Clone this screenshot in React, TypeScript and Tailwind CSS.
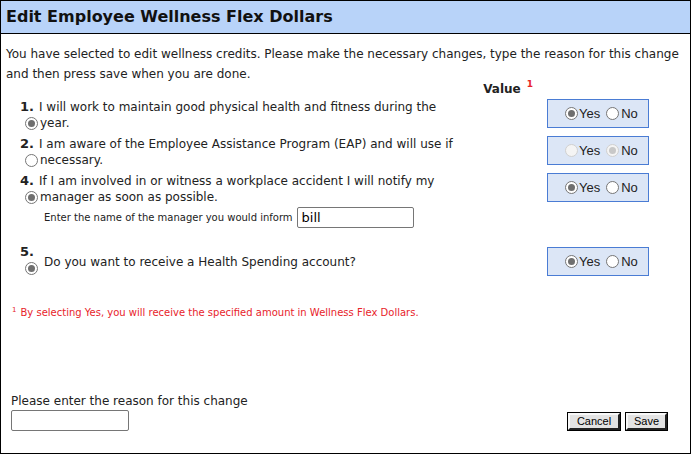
import React from "react";

type RadioState = "on" | "off" | "dis" | "dison";

function Radio({ s }: { s: RadioState }) {
  if (s === "on")
    return (
      <span className="inline-flex w-[13px] h-[13px] rounded-full border border-[#767676] bg-white items-center justify-center shrink-0">
        <span className="w-[7px] h-[7px] rounded-full bg-[#6f6f6f]" />
      </span>
    );
  if (s === "off")
    return <span className="inline-block w-[13px] h-[13px] rounded-full border border-[#767676] bg-white shrink-0" />;
  if (s === "dis")
    return <span className="inline-block w-[13px] h-[13px] rounded-full border border-[#d0d0d0] bg-[#f4f4f4] shrink-0" />;
  return (
    <span className="inline-flex w-[13px] h-[13px] rounded-full border border-[#d0d0d0] bg-[#f4f4f4] items-center justify-center shrink-0">
      <span className="w-[7px] h-[7px] rounded-full bg-[#c8c8c8]" />
    </span>
  );
}

function YesNo({ yes, no }: { yes: RadioState; no: RadioState }) {
  return (
    <div className="w-[102px] h-[29px] border border-[#4a7cd4] bg-[#dce6f6] flex items-center pl-[17px] font-['Liberation_Sans',Arial,sans-serif] text-[13px] text-[#222] shrink-0">
      <Radio s={yes} />
      <span className="ml-[1px]">Yes</span>
      <span className="ml-[6px]" />
      <Radio s={no} />
      <span className="ml-[2px]">No</span>
    </div>
  );
}

function Item({ n, line1, line2, radio, yes, no }: { n: string; line1: string; line2: string; radio: RadioState; yes: RadioState; no: RadioState }) {
  return (
    <div className="flex justify-between">
      <div className="text-[12px] leading-[16px]">
        <div className="flex items-baseline">
          <b className="text-[13px]">{n}</b>
          <span className="ml-[5px]">{line1}</span>
        </div>
        <div className="flex items-center pl-[5px]">
          <Radio s={radio} />
          <span className="ml-[2px]">{line2}</span>
        </div>
      </div>
      <YesNo yes={yes} no={no} />
    </div>
  );
}

export default function App() {
  return (
    <div className="w-[691px] h-[454px] border border-black bg-white font-['DejaVu_Sans',Verdana,sans-serif] text-[#222] flex flex-col">
      <div className="h-[33px] bg-[#b8d3f9] border-b border-black flex items-center pl-[5px] shrink-0">
        <h1 className="text-[16px] font-bold text-[#111]">Edit Employee Wellness Flex Dollars</h1>
      </div>
      <div className="flex-1 flex flex-col">
        <p className="text-[12px] leading-[20px] pl-[5px] pr-[6px] mt-[10px]">
          You have selected to edit wellness credits. Please make the necessary changes, type the reason for this change and then press save when you are done.
        </p>
        <div className="flex justify-end items-start pr-[157px] mt-[-1px] h-[11px]">
          <span className="text-[12px] font-bold leading-[12px]">Value</span>
          <span className="text-[9px] font-bold text-[#e8232a] ml-[6px] leading-[9px] mt-[-3px]">1</span>
        </div>

        <div className="flex flex-col gap-[5px] mt-[5px] pl-[19px] pr-[41px]">
          <Item n="1." line1="I will work to maintain good physical health and fitness during the" line2="year." radio="on" yes="on" no="off" />
          <Item n="2." line1="I am aware of the Employee Assistance Program (EAP) and will use if" line2="necessary." radio="off" yes="dis" no="dison" />
          <Item n="4." line1="If I am involved in or witness a workplace accident I will notify my" line2="manager as soon as possible." radio="on" yes="on" no="off" />
        </div>

        <div className="flex items-center pl-[43px] mt-[2px]">
          <span className="text-[10px]">Enter the name of the manager you would inform</span>
          <input
            readOnly
            value="bill"
            className="ml-[4px] w-[117px] h-[21px] border border-[#767676] rounded-[2px] px-[4px] text-[13px] font-['DejaVu_Sans',Verdana,sans-serif] text-black outline-none"
          />
        </div>

        <div className="flex justify-between pl-[19px] pr-[41px] mt-[19px]">
          <div className="flex flex-col mt-[-2px]">
            <div className="h-[10px] text-[13px] leading-[14px] font-bold">5.</div>
            <div className="flex items-start">
              <span className="mt-[7px] ml-[5px] flex"><Radio s="on" /></span>
              <span className="text-[12px] leading-[14px] ml-[6px]">Do you want to receive a Health Spending account?</span>
            </div>
          </div>
          <YesNo yes="on" no="off" />
        </div>

        <div className="flex pl-[11px] mt-[30px] text-[#e8232a]">
          <span className="text-[7px] leading-[8px]">1</span>
          <span className="text-[10px] leading-[13px] ml-[4px]">By selecting Yes, you will receive the specified amount in Wellness Flex Dollars.</span>
        </div>

        <div className="mt-auto mb-[22px] flex items-end pl-[10px] pr-[23px]">
          <div className="flex flex-col">
            <span className="text-[12px] leading-[16px]">Please enter the reason for this change</span>
            <input
              readOnly
              className="mt-[1px] w-[118px] h-[21px] border border-[#767676] rounded-[2px] outline-none"
            />
          </div>
          <div className="ml-auto flex gap-[6px] mb-[1px] font-['Liberation_Sans',Arial,sans-serif] text-[11px] text-black">
            <button className="h-[17px] w-[52px] bg-[#e3e3e3] border-2 border-t-[#f8f8f8] border-l-[#f8f8f8] border-b-[#222] border-r-[#222] outline outline-1 outline-black leading-none">Cancel</button>
            <button className="h-[17px] w-[41px] bg-[#e3e3e3] border-2 border-t-[#f8f8f8] border-l-[#f8f8f8] border-b-[#222] border-r-[#222] outline outline-1 outline-black leading-none">Save</button>
          </div>
        </div>
      </div>
    </div>
  );
}
